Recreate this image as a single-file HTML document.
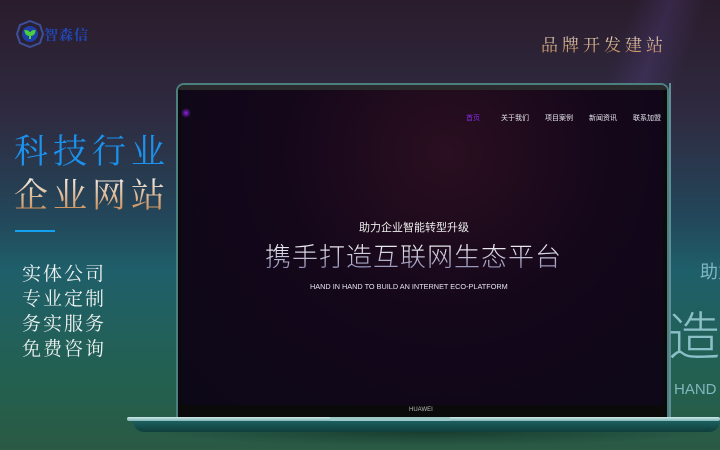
<!DOCTYPE html>
<html><head><meta charset="utf-8"><style>
*{margin:0;padding:0;box-sizing:border-box}
body{width:720px;height:450px;overflow:hidden;position:relative;font-family:"Liberation Sans","Noto Sans CJK SC",sans-serif;
background:linear-gradient(180deg,#2a1c2c 0%,#2f2a40 25%,#23465a 48%,#1f5f6a 60%,#23604f 85%,#2a5a44 100%);}
.abs{position:absolute;white-space:nowrap}
.serif{font-family:"Liberation Serif","Noto Serif CJK SC",serif}
.t1{left:14px;top:124px;font-size:34px;color:#1a92ee;letter-spacing:5px}
.t2{left:14px;top:168px;font-size:34px;letter-spacing:5px;background:linear-gradient(180deg,#f4ece4 20%,#c98a52 90%);-webkit-background-clip:text;color:transparent}
.list{left:22px;top:262px;font-size:19px;line-height:25px;color:#eef2f2;letter-spacing:2px}
.brand{left:541px;top:31px;font-size:17px;letter-spacing:4px;background:linear-gradient(180deg,#f2e6d8,#c98a52);-webkit-background-clip:text;color:transparent}
.ghost{color:#7fb7c0}
</style></head><body>
<div class="abs" style="left:560px;top:0;width:160px;height:240px;background:linear-gradient(110deg,transparent 30%,rgba(120,90,200,.18) 45%,transparent 60%)"></div>
<svg class="abs" style="left:16px;top:20px" width="28" height="28" viewBox="0 0 28 28"><polygon points="14,1 24,5 27,14 24,23 14,27 4,23 1,14 4,5" fill="none" stroke="#3d4f9a" stroke-width="2"/><circle cx="14" cy="14" r="8" fill="#1e3fa8"/><path d="M14 19 V12 M14 15 Q10 15 9.5 11 Q13 11 14 15 M14 15 Q18 15 18.5 11 Q15 11 14 15" stroke="#4ccf3c" stroke-width="2" fill="#4ccf3c"/></svg>
<div class="abs serif" style="left:44px;top:25px;font-size:14px;font-weight:bold;color:#2248b8;letter-spacing:1px">智森信</div>
<div class="abs serif brand">品牌开发建站</div>
<div class="abs serif t1">科技行业</div>
<div class="abs serif t2">企业网站</div>
<div class="abs" style="left:15px;top:230px;width:40px;height:2px;background:#12a0f0"></div>
<div class="abs serif list">实体公司<br>专业定制<br>务实服务<br>免费咨询</div>
<div class="abs" style="left:669px;top:83px;width:2px;height:335px;background:#5d8f94"></div>
<div class="abs ghost" style="left:700px;top:258px;font-size:18px">助力</div>
<div class="abs ghost" style="left:668px;top:295px;font-size:52px;font-weight:300;color:#8cc0c8">造</div>
<div class="abs ghost" style="left:674px;top:381px;font-size:15px">HAND</div>
<div class="abs" style="left:176px;top:83px;width:493px;height:336px;border-radius:8px 8px 0 0;background:#0a0a0b;border:2px solid #4d7e80;border-bottom:none"></div>
<div class="abs" style="left:179px;top:85px;width:487px;height:5px;background:#2a2a2c;border-radius:6px 6px 0 0"></div>
<div class="abs" style="left:181px;top:90px;width:482px;height:315px;background:radial-gradient(ellipse at 55% 20%,#2a0f20 0%,#14071a 45%,#0c0818 100%)"></div>
<div class="abs" style="left:181px;top:108px;width:10px;height:10px;border-radius:50%;background:radial-gradient(#8a22e0,transparent 70%)"></div>
<div class="abs" style="left:466px;top:113px;font-size:7px;color:#8a2ae8">首页</div>
<div class="abs" style="left:501px;top:113px;font-size:7px;color:#e8e8f0">关于我们</div>
<div class="abs" style="left:545px;top:113px;font-size:7px;color:#e8e8f0">项目案例</div>
<div class="abs" style="left:589px;top:113px;font-size:7px;color:#e8e8f0">新闻资讯</div>
<div class="abs" style="left:633px;top:113px;font-size:7px;color:#e8e8f0">联系加盟</div>
<div class="abs" style="left:359px;top:219px;font-size:11px;color:#ececec">助力企业智能转型升级</div>
<div class="abs" style="left:265px;top:237px;font-size:26px;font-weight:300;letter-spacing:1px;background:linear-gradient(180deg,#e8e8ee 30%,#7a78a8);-webkit-background-clip:text;color:transparent">携手打造互联网生态平台</div>
<div class="abs" style="left:310px;top:282px;font-size:7.3px;color:#e4e4ee">HAND IN HAND TO BUILD AN INTERNET ECO-PLATFORM</div>
<div class="abs" style="left:409px;top:407px;font-size:6px;color:#bbb">HUAWEI</div>
<div class="abs" style="left:127px;top:417px;width:593px;height:4px;border-radius:3px;background:linear-gradient(180deg,#cfe8e8,#7fb5b6)"></div>
<div class="abs" style="left:330px;top:417px;width:120px;height:7px;border-radius:0 0 4px 4px;background:#9cc9c8"></div>
<div class="abs" style="left:133px;top:421px;width:587px;height:11px;border-radius:0 0 20px 20px;background:linear-gradient(180deg,#1d5f60,#0f3f3c)"></div>
<div class="abs" style="left:150px;top:432px;width:560px;height:14px;background:radial-gradient(ellipse at 50% 0,rgba(10,30,25,.5),transparent 70%)"></div>
</body></html>
